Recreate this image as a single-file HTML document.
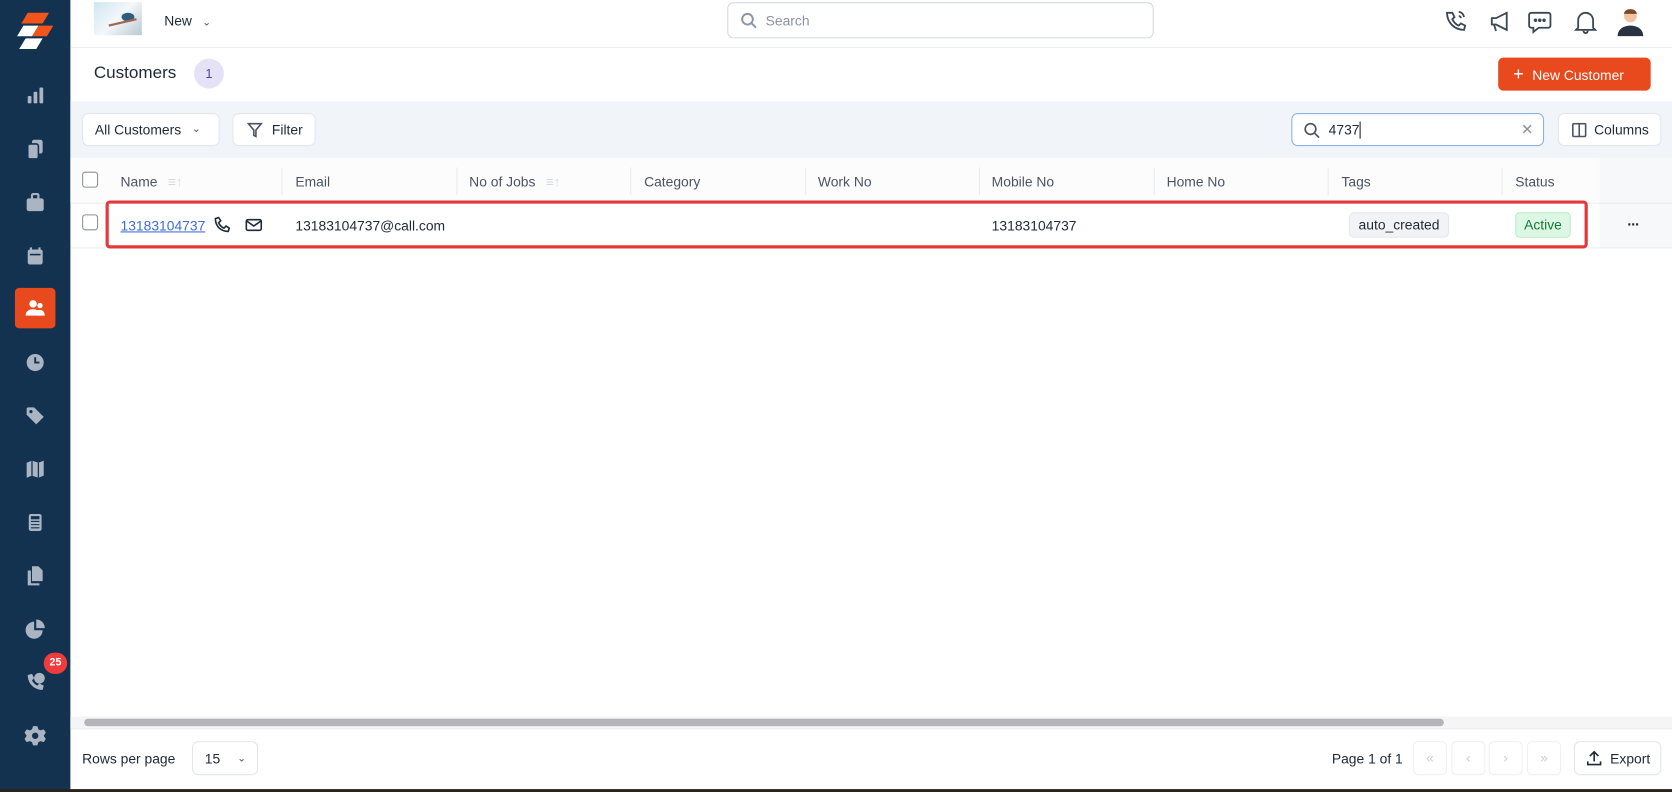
<!DOCTYPE html>
<html><head><meta charset="utf-8"><style>
*{box-sizing:border-box;margin:0;padding:0}
html,body{width:1672px;height:792px;overflow:hidden;background:#fff;font-family:"Liberation Sans",sans-serif;color:#1f2937}
#w{position:absolute;left:0;top:0;width:1568px;height:743px;transform:scale(1.06633);transform-origin:0 0;background:#fff}
.a{position:absolute}
.sb{left:0;top:0;width:66px;height:743px;background:#12324f}
.ic{position:absolute;left:23px;width:20px;height:20px}
.ic svg{width:20px;height:20px;fill:#aab5c3}
.btn{position:absolute;background:#fff;border:1px solid #e3e7ec;border-radius:6px;font-size:13px;color:#1f2937;display:flex;align-items:center}
.th{position:absolute;top:163px;font-size:13px;color:#4b5563}
.sep{position:absolute;top:157px;width:1px;height:26px;background:#e8ebef}
.nav{position:absolute;top:695px;width:32px;height:32px;border:1px solid #eef0f3;border-radius:5px;color:#c8ccd2;font-size:13px;text-align:center;line-height:30px}
</style></head><body><div id="w">
<div class="a sb"></div>
<svg class="a" style="left:14px;top:10px" width="38" height="38" viewBox="0 0 38 38"><polygon points="12,2 32,2 26,12 6,12" fill="#f2541b"/><polygon points="22,14 36,14 30,24 16,24" fill="#f2541b"/><polygon points="8,14 22,14 16,24 2,24" fill="#fff"/><polygon points="10,26 26,26 20,36 4,36" fill="#fff"/></svg>
<div class="ic" style="top:80px"><svg viewBox="0 0 20 20"><rect x="3" y="10" width="3.5" height="7" rx="1"/><rect x="8.5" y="6" width="3.5" height="11" rx="1"/><rect x="14" y="2" width="3.5" height="15" rx="1"/></svg></div>
<div class="ic" style="top:130px"><svg viewBox="0 0 20 20"><rect x="7" y="1" width="10" height="13" rx="2"/><rect x="3" y="5" width="10" height="14" rx="2" stroke="#12324f" stroke-width="1.5"/></svg></div>
<div class="ic" style="top:180px"><svg viewBox="0 0 20 20"><rect x="2" y="6" width="16" height="12" rx="2"/><rect x="7" y="2" width="6" height="5" rx="1" fill="none" stroke="#aab5c3" stroke-width="2"/></svg></div>
<div class="ic" style="top:230px"><svg viewBox="0 0 20 20"><rect x="3" y="4" width="14" height="14" rx="2"/><rect x="5" y="2" width="2" height="4"/><rect x="13" y="2" width="2" height="4"/><rect x="5" y="8" width="10" height="1.5" fill="#12324f"/></svg></div>
<div class="a" style="left:14px;top:270px;width:38px;height:38px;background:#e8491d;border-radius:4px"></div>
<div class="ic" style="top:279px"><svg viewBox="0 0 20 20" style="fill:#fff"><circle cx="8" cy="6" r="3.5"/><path d="M1 17c0-4 3-6 7-6s7 2 7 6z"/><circle cx="14.5" cy="7.5" r="2.5"/><path d="M13 17c0-2 0-4-1-5 3-1 7 0 7 5z"/></svg></div>
<div class="ic" style="top:330px"><svg viewBox="0 0 20 20"><circle cx="10" cy="10" r="8"/><path d="M10 5v5h4" stroke="#12324f" stroke-width="1.8" fill="none"/></svg></div>
<div class="ic" style="top:380px"><svg viewBox="0 0 20 20"><path d="M2 3v6l9 9 7-7-9-9H3z"/><circle cx="6" cy="6" r="1.5" fill="#12324f"/></svg></div>
<div class="ic" style="top:430px"><svg viewBox="0 0 20 20"><path d="M2 4l5-2 6 2 5-2v14l-5 2-6-2-5 2z"/><path d="M7 2v14M13 4v14" stroke="#12324f" stroke-width="1.2"/></svg></div>
<div class="ic" style="top:480px"><svg viewBox="0 0 20 20"><rect x="4" y="2" width="12" height="16" rx="2"/><rect x="6" y="4" width="8" height="3" fill="#12324f"/><path d="M6 9h8M6 12h8M6 15h8" stroke="#12324f" stroke-width="1"/></svg></div>
<div class="ic" style="top:530px"><svg viewBox="0 0 20 20"><path d="M7 1h6l4 4v10H7z"/><path d="M3 5h3v12h8v2H3z"/></svg></div>
<div class="ic" style="top:580px"><svg viewBox="0 0 20 20"><path d="M9 3a8 8 0 1 0 8 8H9z"/><path d="M11 1a8 8 0 0 1 8 8h-8z"/></svg></div>
<div class="ic" style="top:630px"><svg viewBox="0 0 20 20"><path d="M3 3c0 8 6 14 14 14l1-4-4-2-2 2c-2-1-4-3-5-5l2-2-2-4z"/><circle cx="14" cy="6" r="5"/></svg></div>
<div class="a" style="left:41px;top:612px;width:22px;height:20px;border-radius:10px;background:#ef3b3b;color:#fff;font-size:10px;font-weight:bold;text-align:center;line-height:20px">25</div>
<div class="ic" style="top:680px"><svg viewBox="0 0 20 20"><path d="M8 1h4l1 3 2 1 3-1 2 3-2 3 2 3-2 3-3-1-2 1-1 3H8l-1-3-2-1-3 1-2-3 2-3-2-3 2-3 3 1 2-1z"/><circle cx="10" cy="10" r="3" fill="#12324f"/></svg></div>

<div class="a" style="left:66px;top:44px;width:1502px;height:1px;background:#eceff2"></div>
<div class="a" style="left:88px;top:2px;width:45px;height:31px;background:linear-gradient(135deg,#cfe6f2,#f4f7fa 50%,#b8c8d3);"></div>
<svg class="a" style="left:100px;top:6px" width="30" height="24"><ellipse cx="20" cy="10" rx="6" ry="4" fill="#2f5d80"/><path d="M2 18 L28 12" stroke="#a0674e" stroke-width="2"/></svg>
<div class="a" style="left:154px;top:12px;font-size:13px;color:#1f2937">New <span style="font-size:10px;margin-left:6px;color:#4b5563">&#8964;</span></div>
<div class="a" style="left:682px;top:2px;width:400px;height:34px;border:1px solid #d5d9df;border-radius:6px"></div>
<svg class="a" style="left:694px;top:11px" width="16" height="16" fill="none" stroke="#8a94a3" stroke-width="1.8"><circle cx="7" cy="7" r="5"/><path d="M11 11l4 4"/></svg>
<div class="a" style="left:718px;top:12px;font-size:13px;color:#8a94a3">Search</div>
<svg class="a" style="left:1354px;top:8px" width="180" height="26" fill="none" stroke="#3b4656" stroke-width="1.7">
<path d="M3 4c0 9 7 16 16 16l1-4-4-2-2 2c-3-1-5-4-6-6l2-2-2-4z"/><path d="M14 3a6 6 0 0 1 5 5M14 7a2 2 0 0 1 2 2"/>
<path d="M45 9h4l10-5v16l-10-5h-4zM47 15l2 6"/>
<path d="M82 4h16a2 2 0 0 1 2 2v10a2 2 0 0 1-2 2h-9l-5 4v-4h-2a2 2 0 0 1-2-2V6a2 2 0 0 1 2-2z"/><circle cx="86" cy="11" r=".8"/><circle cx="90" cy="11" r=".8"/><circle cx="94" cy="11" r=".8"/>
<path d="M126 18V11a7 7 0 0 1 14 0v7l2 2h-18zM131 21a2 2 0 0 0 4 0"/></svg>
<svg class="a" style="left:1515px;top:4px" width="28" height="30"><circle cx="14" cy="11" r="6" fill="#f0c4a2"/><path d="M8 9c0-6 12-6 12 0" fill="#7a4a2a"/><path d="M2 30c0-7 6-10 12-10s12 3 12 10z" fill="#2a3242"/></svg>

<div class="a" style="left:88px;top:60px;font-size:16px;color:#1f2937">Customers</div>
<div class="a" style="left:182px;top:55px;width:28px;height:28px;border-radius:14px;background:#e5e2f8;color:#4a45a8;font-size:12px;text-align:center;line-height:28px">1</div>
<div class="a" style="left:1405px;top:54px;width:143px;height:31px;background:#e8491d;border-radius:5px;color:#fff;font-size:13px;line-height:31px;padding-left:14px"><span style="font-size:17px;margin-right:8px">+</span>New Customer</div>

<div class="a" style="left:66px;top:95px;width:1502px;height:53px;background:#f1f4f8"></div>
<div class="btn" style="left:77px;top:106px;width:129px;height:31px;padding-left:11px">All Customers <span style="font-size:10px;margin-left:10px;color:#4b5563">&#8964;</span></div>
<div class="btn" style="left:218px;top:106px;width:78px;height:31px;padding-left:12px"><svg width="16" height="16" fill="none" stroke="#4b5563" stroke-width="1.5" style="margin-right:8px"><path d="M2 2h12l-5 6v6l-2-1V8z"/></svg>Filter</div>
<div class="btn" style="left:1211px;top:106px;width:237px;height:31px;border-color:#8eb1e0;padding-left:10px"><svg width="16" height="16" fill="none" stroke="#4b5563" stroke-width="1.6" style="margin-right:8px"><circle cx="7" cy="7" r="5"/><path d="M11 11l4 4"/></svg>4737<span style="display:inline-block;width:1px;height:16px;background:#222"></span><span style="position:absolute;right:9px;color:#8a94a3;font-size:14px">&#10005;</span></div>
<div class="btn" style="left:1461px;top:106px;width:97px;height:31px;padding-left:12px"><svg width="14" height="14" fill="none" stroke="#4b5563" stroke-width="1.5" style="margin-right:7px"><rect x="1" y="1" width="12" height="12" rx="1"/><path d="M7 1v12"/></svg>Columns</div>

<div class="a" style="left:66px;top:148px;width:1502px;height:42px;background:#fcfcfd"></div>
<div class="a" style="left:1500px;top:148px;width:68px;height:85px;background:#f7f8fa"></div>
<div class="a" style="left:77px;top:161px;width:15px;height:15px;border:1px solid #8a919a;border-radius:3px;background:#fff"></div>
<div class="th" style="left:113px">Name <span style="color:#d5d9df;margin-left:6px">&#8801;&#8593;</span></div>
<div class="th" style="left:277px">Email</div>
<div class="th" style="left:440px">No of Jobs <span style="color:#d5d9df;margin-left:6px">&#8801;&#8593;</span></div>
<div class="th" style="left:604px">Category</div>
<div class="th" style="left:767px">Work No</div>
<div class="th" style="left:930px">Mobile No</div>
<div class="th" style="left:1094px">Home No</div>
<div class="th" style="left:1258px">Tags</div>
<div class="th" style="left:1421px">Status</div>
<div class="sep" style="left:264px"></div><div class="sep" style="left:428px"></div><div class="sep" style="left:591px"></div><div class="sep" style="left:755px"></div><div class="sep" style="left:918px"></div><div class="sep" style="left:1082px"></div><div class="sep" style="left:1245px"></div><div class="sep" style="left:1408px"></div>
<div class="a" style="left:66px;top:190px;width:1502px;height:1px;background:#e8ebef"></div>
<div class="a" style="left:66px;top:232px;width:1502px;height:1px;background:#e8ebef"></div>

<div class="a" style="left:77px;top:201px;width:15px;height:15px;border:1px solid #8a919a;border-radius:3px"></div>
<div class="a" style="left:113px;top:204px;font-size:13px;color:#3d6fd6;text-decoration:underline">13183104737</div>
<svg class="a" style="left:200px;top:203px" width="50" height="16" fill="none" stroke="#1f2937" stroke-width="1.5"><path d="M2 2c0 7 5 12 12 12l1-3-3-2-2 2c-2-1-4-3-5-5l2-2-2-3z"/><rect x="31" y="3" width="14" height="10" rx="1.5"/><path d="M31 4l7 5 7-5"/></svg>
<div class="a" style="left:277px;top:204px;font-size:13px;color:#1f2937">13183104737@call.com</div>
<div class="a" style="left:930px;top:204px;font-size:13px;color:#1f2937">13183104737</div>
<div class="a" style="left:1265px;top:199px;width:94px;height:24px;background:#f1f3f6;border:1px solid #e5e8ec;border-radius:5px;font-size:13px;text-align:center;line-height:22px">auto_created</div>
<div class="a" style="left:1421px;top:199px;width:52px;height:24px;background:#dcf7e3;border:1px solid #b9ecc7;border-radius:4px;font-size:13px;color:#157a38;text-align:center;line-height:22px">Active</div>
<div class="a" style="left:1526px;top:202px;font-size:14px;font-weight:bold;letter-spacing:-1px">&middot;&middot;&middot;</div>
<div class="a" style="left:99px;top:188px;width:1390px;height:45px;border:3px solid #e5383b;border-radius:4px"></div>

<div class="a" style="left:66px;top:672px;width:1502px;height:11px;background:#f5f5f6"></div>
<div class="a" style="left:79px;top:674px;width:1275px;height:7px;border-radius:4px;background:#b5b5b9"></div>
<div class="a" style="left:66px;top:683px;width:1502px;height:1px;background:#e8ebef"></div>

<div class="a" style="left:77px;top:704px;font-size:13px">Rows per page</div>
<div class="btn" style="left:180px;top:695px;width:62px;height:32px;padding-left:11px">15 <span style="font-size:10px;margin-left:16px;color:#4b5563">&#8964;</span></div>
<div class="a" style="left:1249px;top:704px;font-size:13px">Page 1 of 1</div>
<div class="nav" style="left:1325px">&laquo;</div><div class="nav" style="left:1361px">&lsaquo;</div><div class="nav" style="left:1396px">&rsaquo;</div><div class="nav" style="left:1432px">&raquo;</div>
<div class="btn" style="left:1476px;top:695px;width:82px;height:32px;padding-left:11px"><svg width="14" height="14" fill="none" stroke="#1f2937" stroke-width="1.5" style="margin-right:8px"><path d="M7 10V1M3 5l4-4 4 4M1 10v3h12v-3"/></svg>Export</div>
<div class="a" style="left:0;top:740px;width:1568px;height:3px;background:#2a241e"></div>
</div></body></html>
